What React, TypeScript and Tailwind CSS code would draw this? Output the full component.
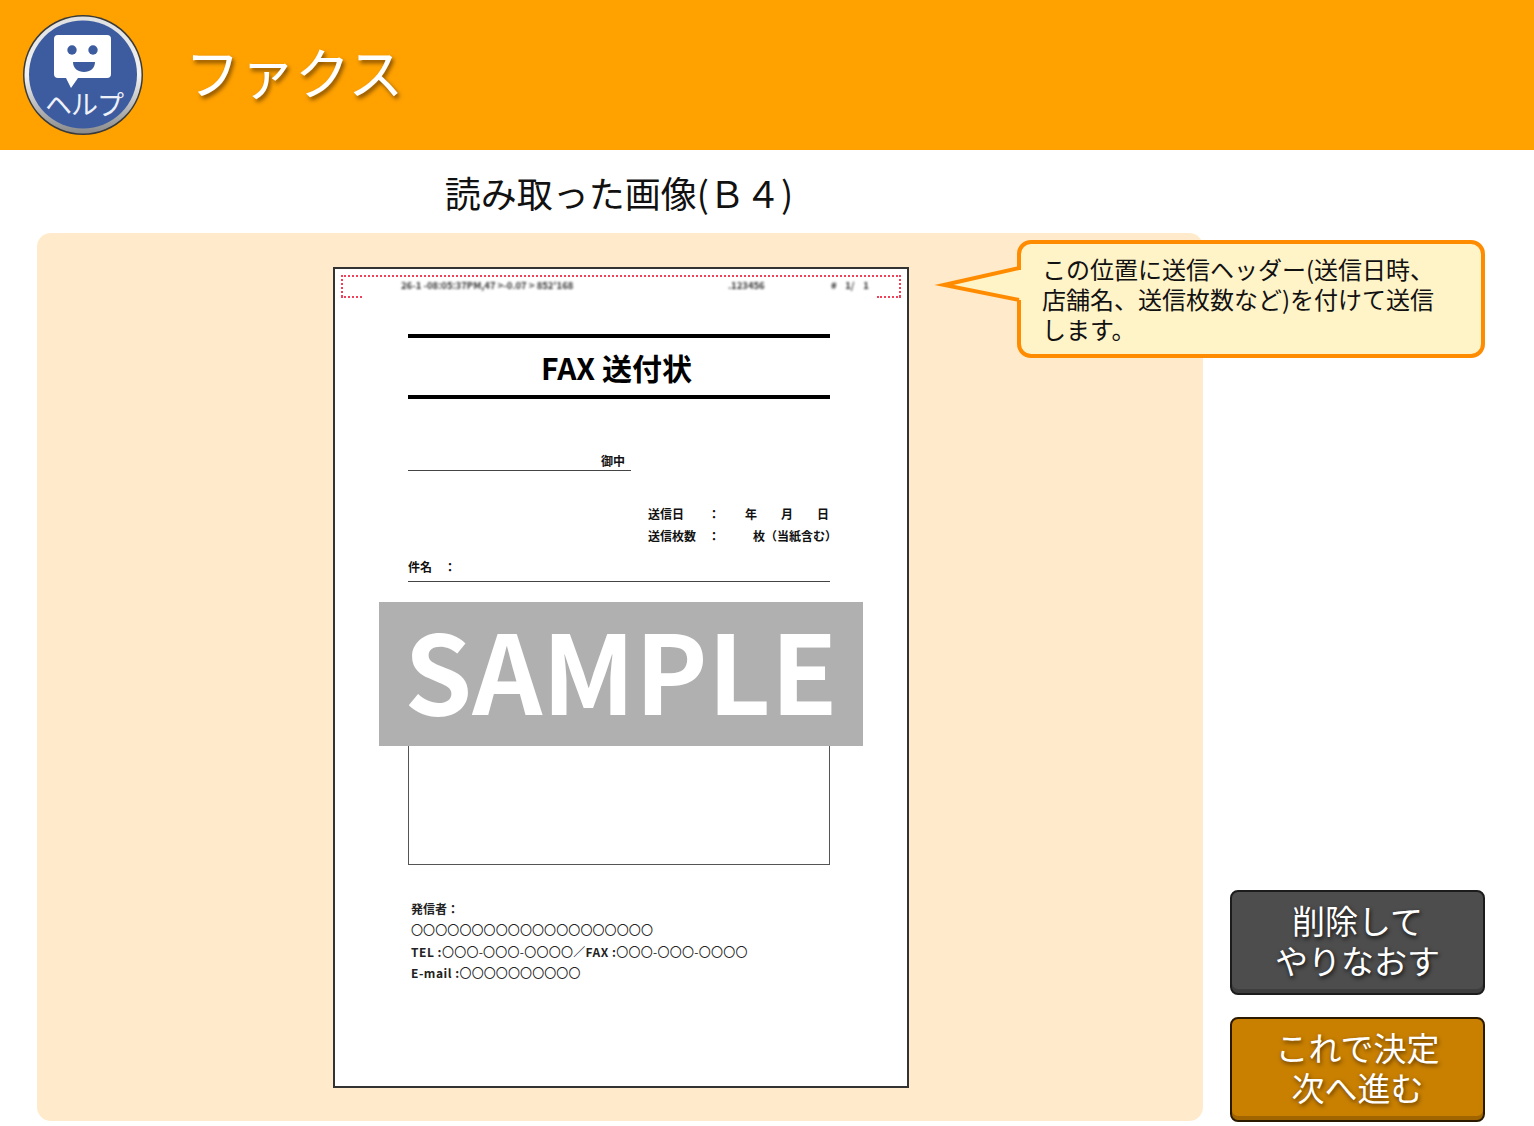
import type { ReactNode } from 'react'

const cjk = { fontFamily: '"Noto Sans CJK JP", "Noto Sans", sans-serif' }

// ─── Header ───────────────────────────────────────────────────────────────────

function HelpBadge(): JSX.Element {
  return (
    <svg width="122" height="122" viewBox="0 0 122 122" className="shrink-0">
      <defs>
        <linearGradient id="ring" x1="0" y1="0" x2="0" y2="1">
          <stop offset="0" stopColor="#e0e0e0" />
          <stop offset="0.5" stopColor="#f2f2f2" />
          <stop offset="1" stopColor="#8a8a8a" />
        </linearGradient>
      </defs>
      <circle cx="61" cy="61" r="60" fill="#3a3a3a" />
      <circle cx="61" cy="61" r="58.500" fill="url(#ring)" />
      <circle cx="61" cy="60.500" r="54" fill="#3d5c9f" />
      <path
        d="M36 21h49a4 4 0 0 1 4 4v35a4 4 0 0 1-4 4H56l-7 10-5-10h-8a4 4 0 0 1-4-4V25a4 4 0 0 1 4-4z"
        fill="#fff"
      />
      <circle cx="50" cy="36" r="4.700" fill="#3d5c9f" />
      <circle cx="71" cy="36" r="4.700" fill="#3d5c9f" />
      <path d="M51 48h22c0 6.500-5 10-11 10s-11-3.500-11-10z" fill="#3d5c9f" />
      <text x="62" y="101" textAnchor="middle" fill="#eef1f8" fontSize="27" letterSpacing="-1" style={cjk}>
        ヘルプ
      </text>
    </svg>
  )
}

function Header(): JSX.Element {
  return (
    <header className="flex h-[150px] items-center bg-[#ffa200] pl-[22px]">
      <HelpBadge />
      <h1
        className="mb-[10px] ml-[41px] text-[55px] leading-none text-white [text-shadow:2px_3px_4px_rgba(90,50,0,0.75)]"
        style={cjk}
      >
        ファクス
      </h1>
    </header>
  )
}

// ─── Faxed page ───────────────────────────────────────────────────────────────

function FaxHeaderGuide(): JSX.Element {
  return (
    <div className="relative mx-[6px] mt-[6px] flex h-[22px] border-x-2 border-t-2 border-dotted border-[#f0405a]">
      <span className="absolute -bottom-[1px] -left-[2px] w-[21px] border-b-2 border-dotted border-[#f0405a]" />
      <span className="absolute -bottom-[1px] -right-[2px] w-[24px] border-b-2 border-dotted border-[#f0405a]" />
      <div className="flex h-[16px] w-full items-center whitespace-pre text-[9.500px] font-bold text-[#333] blur-[1.200px]">
        <span className="ml-[58px] w-[327px]">26-1 -08:05:37PM,47 &gt;-0.07 &gt; 852'168</span>
        <span className="w-[103px]">.123456</span>
        <span>{'#    1/    1'}</span>
      </div>
    </div>
  )
}

function Row({ label, children }: { label: string; children: ReactNode }): JSX.Element {
  return (
    <div className="flex h-[22px] items-center justify-between text-[12px] font-bold leading-none text-[#111]">
      <div className="flex">
        <span className="w-[60px]">{label}</span>
        <span>：</span>
      </div>
      {children}
    </div>
  )
}

function FaxPage(): JSX.Element {
  return (
    <div className="relative flex h-[821px] w-[576px] shrink-0 flex-col border-2 border-[#333] bg-white" style={cjk}>
      <FaxHeaderGuide />

      <div className="mx-[73px] mt-[37px] flex w-[422px] flex-col">
        <div className="flex h-[65px] items-center justify-center border-y-4 border-black pr-[5px] text-[30px] font-bold leading-none text-black">
          FAX 送付状
        </div>

        <div className="mt-[52px] flex h-[20px] w-[223px] items-center justify-end border-b border-[#444] pr-[6px] text-[12px] font-bold leading-none text-[#111]">
          御中
        </div>

        <div className="mt-[32px] ml-[240px] flex flex-col">
          <Row label="送信日">
            <span className="mr-[1px] flex gap-[24px]">
              <span>年</span>
              <span>月</span>
              <span>日</span>
            </span>
          </Row>
          <Row label="送信枚数">
            <span className="-mr-[7px]">枚（当紙含む）</span>
          </Row>
        </div>

        <div className="mt-[9px] flex h-[26px] items-center border-b border-[#444] pb-[4px] text-[12px] font-bold leading-none text-[#111]">
          <span className="w-[36px]">件名</span>
          <span>：</span>
        </div>

        {/* top edge of this box sits under the SAMPLE band */}
        <div className="mt-[38px] h-[245px] border border-[#555]" />

        <div className="mt-[33px] ml-[3px] flex flex-col text-[12px] font-bold leading-[21.300px] text-[#222]">
          <span>発信者：</span>
          <span className="font-normal tracking-[0.100px]">〇〇〇〇〇〇〇〇〇〇〇〇〇〇〇〇〇〇〇〇</span>
          <span className="whitespace-nowrap">
            <span className="tracking-[0.500px]">TEL :</span>
            <span className="font-normal tracking-[0.250px]">〇〇〇-〇〇〇-〇〇〇〇／</span>
            <span className="tracking-[0.500px]">FAX :</span>
            <span className="font-normal tracking-[0.250px]">〇〇〇-〇〇〇-〇〇〇〇</span>
          </span>
          <span>
            <span className="tracking-[0.500px]">E-mail :</span>
            <span className="font-normal tracking-[0.100px]">〇〇〇〇〇〇〇〇〇〇</span>
          </span>
        </div>
      </div>

      <div className="absolute left-[44px] top-[333px] flex h-[144px] w-[484px] items-center justify-center bg-[#b0b0b0] pb-[13px] text-[109px] font-bold leading-none text-white">
        SAMPLE
      </div>
    </div>
  )
}

// ─── Callout ──────────────────────────────────────────────────────────────────

function Callout(): JSX.Element {
  return (
    <div className="absolute left-[930px] top-[240px] h-[118px] w-[555px]" style={cjk}>
      <div className="absolute left-[87px] top-0 flex h-[118px] w-[468px] items-center rounded-[14px] border-4 border-[#ff8c00] bg-[#fff3c8] pl-[21px] pr-[30px] text-[24px] leading-[30px] text-[#111]">
        この位置に送信ヘッダー(送信日時、店舗名、送信枚数など)を付けて送信します。
      </div>
      <svg width="92" height="90" viewBox="0 0 92 90" className="absolute left-0 top-0">
        <rect x="86" y="30" width="6" height="30" fill="#fff3c8" />
        <path d="M89 28 L14 45 L89 60" fill="#fff3c8" stroke="#ff8c00" strokeWidth="4" strokeLinejoin="miter" strokeMiterlimit="20" />
      </svg>
    </div>
  )
}

// ─── Buttons ──────────────────────────────────────────────────────────────────

function ActionButton({ className, children }: { className: string; children: ReactNode }): JSX.Element {
  return (
    <button
      className={`flex h-[105px] w-[255px] flex-col items-center justify-center rounded-[8px] border-2 pb-[6px] text-[33px] leading-[40px] text-white ${className}`}
      style={cjk}
    >
      {children}
    </button>
  )
}

// ─── Page ─────────────────────────────────────────────────────────────────────

export default function App(): JSX.Element {
  return (
    <div className="relative h-[1126px] w-[1534px] overflow-hidden bg-white">
      <Header />

      <h2 className="flex h-[83px] w-[1238px] items-center justify-center text-[36px] leading-none text-[#111]" style={cjk}>
        読み取った画像(Ｂ４)
      </h2>

      <div className="flex h-[889px] pl-[37px]">
        <section className="flex h-[888px] w-[1166px] rounded-[14px] bg-[#ffebcb] pl-[296px] pt-[34px]">
          <FaxPage />
        </section>

        <aside className="ml-[27px] flex flex-col justify-end gap-[22px]">
          <ActionButton className="border-[#1c1c1c] bg-[#4d4d4d] shadow-[inset_0_-4px_0_#3e3e3e] [text-shadow:1px_2px_4px_rgba(0,0,0,0.8)]">
            <span>削除して</span>
            <span>やりなおす</span>
          </ActionButton>
          <ActionButton className="border-[#2b1a00] bg-[#c98000] shadow-[inset_0_-4px_0_#a06500] [text-shadow:1px_2px_4px_rgba(80,45,0,0.9)]">
            <span>これで決定</span>
            <span>次へ進む</span>
          </ActionButton>
        </aside>
      </div>

      <Callout />
    </div>
  )
}
